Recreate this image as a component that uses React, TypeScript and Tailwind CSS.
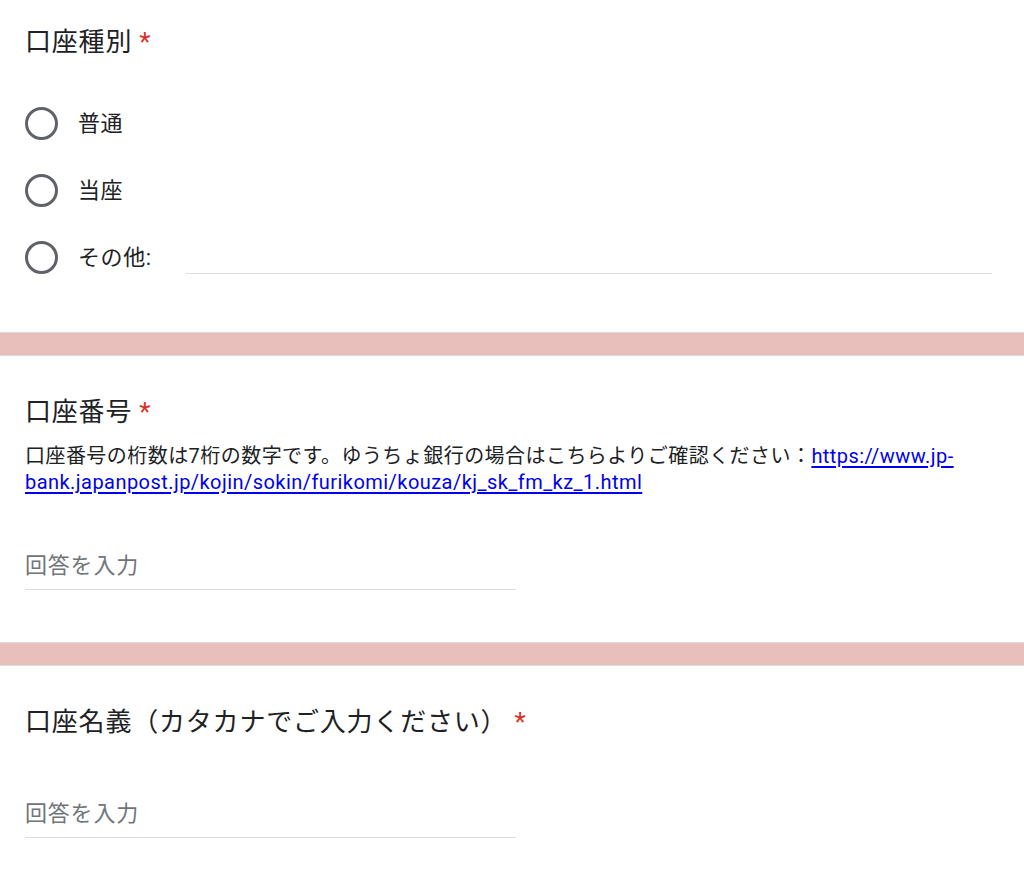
import React from 'react';

const FONT = { fontFamily: 'Roboto, "Noto Sans CJK JP", sans-serif' };

const OPTIONS = ['普通', '当座'];

function Required() {
  return <span className="ml-[7px] text-[#d93025]">*</span>;
}

function Band() {
  return <div className="h-[24px] bg-[#e8bfba] border-y border-[#dadce0]" />;
}

function Radio() {
  return <div className="h-[33px] w-[33px] shrink-0 rounded-full border-[3px] border-[#5f6368]" />;
}

function AnswerInput() {
  return (
    <div className="w-[491px] border-b border-[#dadce0] pb-[8px]">
      <p className="text-[22px] leading-[30px] tracking-[0.8px] text-[#70757a]">回答を入力</p>
    </div>
  );
}

export default function App() {
  return (
    <div className="min-h-screen bg-white text-[#202124]" style={FONT}>
      {/* 口座種別 */}
      <section className="px-[25px] pt-[24px] pb-[41px]">
        <h2 className="text-[26px] leading-[36px] tracking-[0.8px]">
          口座種別<Required />
        </h2>
        <div className="mt-[30px] flex flex-col">
          {OPTIONS.map((label) => (
            <div key={label} className="flex h-[67px] items-center">
              <Radio />
              <span className="ml-[20px] text-[22px] tracking-[0.6px]">{label}</span>
            </div>
          ))}
          <div className="flex h-[67px] items-center">
            <Radio />
            <span className="ml-[20px] text-[22px] tracking-[0.6px]">その他:</span>
            <div className="ml-[34px] mr-[7px] h-[33px] flex-1 border-b border-[#dadce0]" />
          </div>
        </div>
      </section>

      <Band />

      {/* 口座番号 */}
      <section className="px-[25px] pt-[38px] pb-[52px]">
        <h2 className="text-[26px] leading-[36px] tracking-[0.8px]">
          口座番号<Required />
        </h2>
        <p className="mt-[13px] text-[20px] leading-[26px] tracking-[0.45px]">
          口座番号の桁数は7桁の数字です。ゆうちょ銀行の場合はこちらよりご確認ください：
          <a
            href="#"
            className="text-[#0000ee] underline underline-offset-[3px]"
          >
            https://www.jp-
            <br />
            bank.japanpost.jp/kojin/sokin/furikomi/kouza/kj_sk_fm_kz_1.html
          </a>
        </p>
        <div className="mt-[56px]">
          <AnswerInput />
        </div>
      </section>

      <Band />

      {/* 口座名義 */}
      <section className="px-[25px] pt-[38px] pb-[40px]">
        <h2 className="text-[26px] leading-[36px] tracking-[0.8px]">
          口座名義（カタカナでご入力ください）<Required />
        </h2>
        <div className="mt-[59px]">
          <AnswerInput />
        </div>
      </section>
    </div>
  );
}
